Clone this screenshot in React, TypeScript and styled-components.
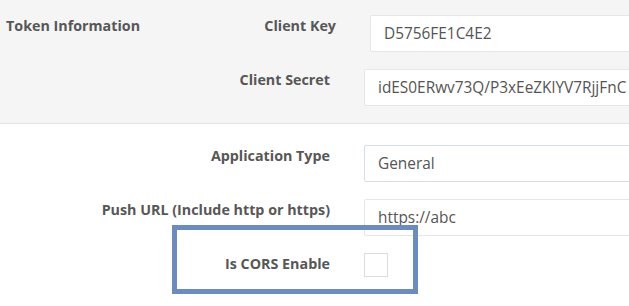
import styled, { createGlobalStyle } from "styled-components";

const GlobalStyle = createGlobalStyle`
  html, body {
    margin: 0;
    padding: 0;
    background: #ffffff;
    overflow: hidden;
  }
  body {
    font-family: "Open Sans", "DejaVu Sans", sans-serif;
    color: #555555;
  }
`;

const Page = styled.div`
  width: 629px;
  height: 306px;
  overflow: hidden;
`;

const Section = styled.section<{ $muted?: boolean }>`
  display: flex;
  flex-direction: column;
  gap: 17px;
  padding: ${(p) => (p.$muted ? "15px 0 17px" : "21px 0 0")};
  background: ${(p) => (p.$muted ? "#f5f5f5" : "#ffffff")};
  border-bottom: ${(p) => (p.$muted ? "1px solid #e4e4e4" : "none")};
`;

const Row = styled.div<{ $labelWidth?: number }>`
  position: relative;
  display: grid;
  grid-template-columns: ${(p) => p.$labelWidth ?? 330}px 1fr;
  column-gap: 34px;
  align-items: start;
`;

const LabelCell = styled.div`
  display: flex;
  justify-content: space-between;
  align-items: flex-start;
`;

const SectionTitle = styled.span`
  padding-left: 6px;
  padding-top: 1px;
  font-size: 14.3px;
  font-weight: 700;
  line-height: 20px;
  color: #575757;
`;

const Label = styled.label`
  margin-left: auto;
  padding-top: 1px;
  font-size: 14.3px;
  font-weight: 700;
  line-height: 20px;
  color: #575757;
  text-align: right;
  white-space: nowrap;
`;

const TextBox = styled.div<{ $tinted?: boolean }>`
  box-sizing: border-box;
  width: 320px;
  height: 37px;
  padding: 0 13px;
  display: flex;
  align-items: center;
  background: #ffffff;
  border: 1px solid ${(p) => (p.$tinted ? "#d6dde6" : "#e6e6e6")};
  border-radius: 2px;
  font-size: 15.4px;
  color: #555555;
  white-space: nowrap;
  overflow: hidden;
`;

const CheckBox = styled.div`
  box-sizing: border-box;
  width: 24px;
  height: 24px;
  background: #ffffff;
  border: 1px solid #dcdcdc;
`;

const Highlight = styled.div`
  position: absolute;
  left: 172px;
  top: -28px;
  width: 246px;
  height: 69px;
  box-sizing: border-box;
  border: 5px solid #6c8cbb;
  pointer-events: none;
`;

export default function App() {
  return (
    <Page>
      <GlobalStyle />
      <Section $muted>
        <Row $labelWidth={336}>
          <LabelCell>
            <SectionTitle>Token Information</SectionTitle>
            <Label>Client Key</Label>
          </LabelCell>
          <TextBox>D5756FE1C4E2</TextBox>
        </Row>
        <Row>
          <LabelCell>
            <Label>Client Secret</Label>
          </LabelCell>
          <TextBox>idES0ERwv73Q/P3xEeZKlYV7RjjFnC</TextBox>
        </Row>
      </Section>
      <Section>
        <Row>
          <LabelCell>
            <Label>Application Type</Label>
          </LabelCell>
          <TextBox $tinted>General</TextBox>
        </Row>
        <Row>
          <LabelCell>
            <Label>Push URL (Include http or https)</Label>
          </LabelCell>
          <TextBox>https://abc</TextBox>
        </Row>
        <Row>
          <LabelCell>
            <Label>Is CORS Enable</Label>
          </LabelCell>
          <CheckBox />
          <Highlight />
        </Row>
      </Section>
    </Page>
  );
}
